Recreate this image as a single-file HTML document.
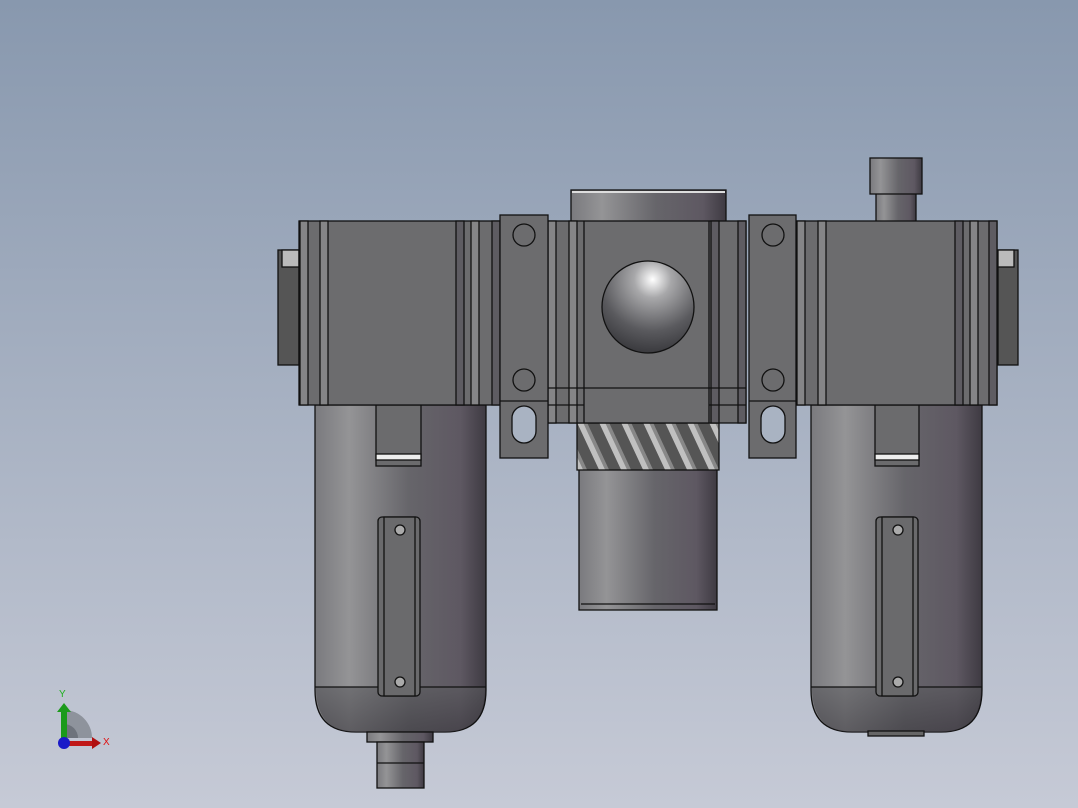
<!DOCTYPE html>
<html><head><meta charset="utf-8"><style>html,body{margin:0;padding:0;width:1078px;height:808px;overflow:hidden}</style></head><body>
<svg width="1078" height="808" viewBox="0 0 1078 808" xmlns="http://www.w3.org/2000/svg" font-family="Liberation Sans, sans-serif">
<defs>
<linearGradient id="bg" x1="0" y1="0" x2="0" y2="1"><stop offset="0" stop-color="#8898ae"/><stop offset="1" stop-color="#c6cad6"/></linearGradient>
<linearGradient id="cyl" x1="0" y1="0" x2="1" y2="0"><stop offset="0" stop-color="#7a7a7e"/><stop offset="0.2" stop-color="#949496"/><stop offset="0.55" stop-color="#66656a"/><stop offset="0.85" stop-color="#5e5862"/><stop offset="1" stop-color="#3e3a42"/></linearGradient>
<linearGradient id="bot" x1="0" y1="0" x2="0" y2="1"><stop offset="0" stop-color="#5a5a5e"/><stop offset="1" stop-color="#3a383e"/></linearGradient>
<radialGradient id="ball" cx="0.55" cy="0.2" r="0.8"><stop offset="0" stop-color="#ffffff"/><stop offset="0.25" stop-color="#a8a8aa"/><stop offset="0.7" stop-color="#5a5a5e"/><stop offset="1" stop-color="#3a3a3e"/></radialGradient>
<linearGradient id="gear" x1="0" y1="0" x2="1" y2="0.3" spreadMethod="repeat"><stop offset="0" stop-color="#3a3a3c"/><stop offset="0.5" stop-color="#c8c8c8"/><stop offset="1" stop-color="#3a3a3c"/></linearGradient>
<pattern id="gp" width="22" height="48" patternUnits="userSpaceOnUse" patternTransform="skewX(25)"><rect width="22" height="48" fill="#555"/><rect x="6" width="6" height="48" fill="#c0c0c0"/><rect x="12" width="4" height="48" fill="#888"/></pattern>
</defs>
<rect width="1078" height="808" fill="url(#bg)"/>
<g stroke="#111" stroke-width="1.3">
<!-- top right tube -->
<rect x="876" y="190" width="40" height="32" fill="url(#cyl)"/>
<rect x="870" y="158" width="52" height="36" fill="url(#cyl)"/>
<!-- cap cylinder -->
<rect x="571" y="190" width="155" height="32" fill="url(#cyl)"/>
<line x1="572" y1="192" x2="725" y2="192" stroke="#ddd" stroke-width="2"/>
<!-- bowls -->
<path d="M315 405 H486 V690 Q486 732 445 732 H356 Q315 732 315 690 Z" fill="url(#cyl)"/>
<path d="M316 687 H485 Q485 732 445 732 H356 Q316 732 316 687Z" fill="url(#bot)" opacity="0.6" stroke="none"/>
<line x1="315" y1="687" x2="486" y2="687"/>
<path d="M811 405 H982 V690 Q982 732 941 732 H852 Q811 732 811 690 Z" fill="url(#cyl)"/>
<path d="M812 687 H981 Q981 732 941 732 H852 Q812 732 812 687Z" fill="url(#bot)" opacity="0.6" stroke="none"/>
<line x1="811" y1="687" x2="982" y2="687"/>
<rect x="868" y="731" width="56" height="5" fill="#666"/>
<!-- drain -->
<rect x="367" y="732" width="66" height="10" fill="url(#cyl)"/>
<rect x="377" y="742" width="47" height="46" fill="url(#cyl)"/>
<line x1="377" y1="763" x2="424" y2="763"/>
<!-- tabs -->
<rect x="376" y="405" width="45" height="61" fill="#6b6b6d"/>
<rect x="376" y="454" width="45" height="6" fill="#eee"/>
<rect x="875" y="405" width="44" height="61" fill="#6b6b6d"/>
<rect x="875" y="454" width="44" height="6" fill="#eee"/>
<!-- sight windows -->
<rect x="378" y="517" width="42" height="179" rx="4" fill="#6a6a6c"/>
<rect x="384" y="517" width="31" height="179" fill="#6a6a6c"/>
<circle cx="400" cy="530" r="5" fill="#aaa"/><circle cx="400" cy="682" r="5" fill="#aaa"/>
<rect x="876" y="517" width="42" height="179" rx="4" fill="#6a6a6c"/>
<rect x="882" y="517" width="31" height="179" fill="#6a6a6c"/>
<circle cx="898" cy="530" r="5" fill="#aaa"/><circle cx="898" cy="682" r="5" fill="#aaa"/>
<!-- lower middle cylinder -->
<rect x="579" y="468" width="138" height="142" fill="url(#cyl)"/>
<line x1="581" y1="604" x2="715" y2="604"/>
<rect x="577" y="423" width="142" height="47" fill="url(#gp)"/>
<!-- side fittings -->
<rect x="278" y="250" width="21" height="115" fill="#555"/>
<rect x="282" y="250" width="17" height="17" fill="#bbb"/>
<rect x="998" y="250" width="20" height="115" fill="#555"/>
<rect x="998" y="250" width="16" height="17" fill="#bbb"/>
<!-- bodies -->
<rect x="299" y="221" width="201" height="184" fill="#6c6c6e"/>
<rect x="797" y="221" width="200" height="184" fill="#6c6c6e"/>
<rect x="548" y="221" width="198" height="202" fill="#6c6c6e"/>
<g fill="#858587">
<rect x="300" y="221" width="8" height="184"/><rect x="320" y="221" width="8" height="184"/>
<rect x="456" y="221" width="8" height="184" fill="#5e5c62"/><rect x="471" y="221" width="8" height="184"/><rect x="492" y="221" width="8" height="184" fill="#5e5c62"/>
<rect x="797" y="221" width="8" height="184"/><rect x="818" y="221" width="8" height="184"/>
<rect x="955" y="221" width="8" height="184" fill="#5e5c62"/><rect x="970" y="221" width="8" height="184"/><rect x="989" y="221" width="8" height="184" fill="#5e5c62"/>
<rect x="548" y="221" width="8" height="202"/><rect x="569" y="221" width="8" height="202"/>
<rect x="711" y="221" width="8" height="202" fill="#5e5c62"/><rect x="738" y="221" width="8" height="202" fill="#5e5c62"/>
</g>
<line x1="584" y1="221" x2="584" y2="423"/><line x1="709" y1="221" x2="709" y2="423"/>
<line x1="548" y1="388" x2="746" y2="388"/><line x1="548" y1="405" x2="584" y2="405"/><line x1="709" y1="405" x2="746" y2="405"/>
<circle cx="648" cy="307" r="46" fill="url(#ball)"/>
<!-- brackets -->
<rect x="500" y="215" width="48" height="243" fill="#6c6c6e"/>
<line x1="500" y1="401" x2="548" y2="401"/>
<circle cx="524" cy="235" r="11" fill="#6c6c6e"/><circle cx="524" cy="380" r="11" fill="#6c6c6e"/>
<rect x="512" y="406" width="24" height="37" rx="12" fill="#a9b3c2"/>
<rect x="749" y="215" width="47" height="243" fill="#6c6c6e"/>
<line x1="749" y1="401" x2="796" y2="401"/>
<circle cx="773" cy="235" r="11" fill="#6c6c6e"/><circle cx="773" cy="380" r="11" fill="#6c6c6e"/>
<rect x="761" y="406" width="24" height="37" rx="12" fill="#a9b3c2"/>
</g>
<!-- axis triad -->
<path d="M64 710 A28 28 0 0 1 92 738 H64Z" fill="#8e939c"/>
<path d="M64 724 A14 14 0 0 1 78 738 H64Z" fill="#6e737c"/>
<rect x="61" y="710" width="6" height="28" fill="#1a9a1a"/>
<path d="M57 712 L64 703 L71 712Z" fill="#1c9a1c"/>
<rect x="64" y="741" width="30" height="5" fill="#c01818"/>
<path d="M92 737 L101 743 L92 749Z" fill="#b01010"/>
<circle cx="64" cy="743" r="6" fill="#1a1ac8"/>
<text x="59" y="697" font-size="10" fill="#20b020">Y</text>
<text x="103" y="745" font-size="10" fill="#e01010">X</text>
</svg>
</body></html>
